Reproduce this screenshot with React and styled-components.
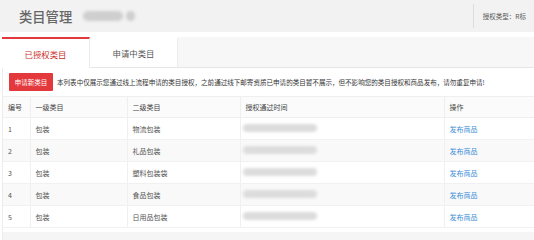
import React from "react";
import styled, { createGlobalStyle } from "styled-components";

const Global = createGlobalStyle`
  html, body { margin: 0; padding: 0; background: #fff; }
  body { font-family: "Noto Sans CJK SC", "Liberation Sans", sans-serif; color: #444; overflow: hidden; }
`;

const Page = styled.div`
  width: 534px;
  height: 240px;
  display: flex;
  flex-direction: column;
  overflow: hidden;
`;

const Header = styled.header`
  height: 32px;
  background: #f2f2f2;
  display: flex;
  align-items: center;
  padding-left: 19px;
  flex-shrink: 0;
`;

const Title = styled.h1`
  margin: 0;
  font-size: 13.3px;
  font-weight: 500;
  color: #666;
  letter-spacing: 0;
`;

const Blur = styled.span`
  display: inline-block;
  width: ${(p) => p.w}px;
  height: ${(p) => p.h}px;
  border-radius: 5px;
  background: ${(p) => p.c || "#cfcfcf"};
  filter: blur(1.6px);
  margin-left: ${(p) => p.ml || 0}px;
`;

const HeaderRight = styled.div`
  margin-left: auto;
  display: flex;
  align-items: center;
  height: 100%;
`;

const Divider = styled.span`
  width: 1px;
  height: 24px;
  background: #dcdcdc;
  margin-right: 9px;
`;

const AuthType = styled.span`
  font-size: 6.5px;
  color: #555;
  padding-right: 8px;
`;

const TabBar = styled.div`
  margin-top: 5px;
  margin-left: 2px;
  height: 30px;
  background: #f7f7f7;
  border-bottom: 1px solid #e6e6e6;
  display: flex;
  flex-shrink: 0;
`;

const Tab = styled.div`
  width: 88px;
  background: #fff;
  box-sizing: border-box;
  border-top: 2px solid ${(p) => (p.active ? "#e4393c" : "transparent")};
  border-right: 1px solid #ececec;
  display: flex;
  align-items: center;
  justify-content: center;
  font-size: 8.4px;
  color: ${(p) => (p.active ? "#c9302c" : "#555")};
  margin-bottom: ${(p) => (p.active ? "-1px" : "0")};
`;

const Content = styled.div`
  margin-left: 2px;
  border-left: 1px solid #ececec;
  flex: 1;
  display: flex;
  flex-direction: column;
`;

const Toolbar = styled.div`
  display: flex;
  align-items: center;
  padding: 5px 0 0 6px;
  height: 18px;
  margin-bottom: 5px;
`;

const RedButton = styled.button`
  width: 44px;
  height: 18px;
  border: none;
  border-radius: 1px;
  background: #e4393c;
  color: #fff;
  font-family: inherit;
  font-size: 6.5px;
  padding: 0;
  cursor: pointer;
`;

const Notice = styled.span`
  margin-left: 4px;
  font-size: 6.55px;
  color: #333;
  white-space: nowrap;
`;

const Table = styled.table`
  width: 531px;
  border-collapse: collapse;
  table-layout: fixed;
  font-size: 7px;
  color: #555;
  border-top: 1px solid #efefef;
`;

const Th = styled.th`
  height: 20px;
  text-align: left;
  font-weight: normal;
  color: #444;
  padding: 0 0 0 ${(p) => p.pl || 5}px;
  background: #fbfbfb;
  border-right: ${(p) => (p.last ? "none" : "1px solid #efefef")};
  border-bottom: 1px solid #efefef;
`;

const Tr = styled.tr`
  background: ${(p) => (p.alt ? "#f9f9f9" : "#fff")};
`;

const Td = styled.td`
  height: 21px;
  padding: 0 0 0 ${(p) => p.pl || 5}px;
  border-right: ${(p) => (p.last ? "none" : "1px solid #f0f0f0")};
  border-bottom: 1px solid #f1f1f1;
`;

const Link = styled.a`
  color: #3d8fd8;
  text-decoration: none;
`;

const Footer = styled.div`
  margin-top: 4px;
  height: 8px;
  background: #f5f5f5;
`;

const rows = [
  ["1", "包装", "物流包装"],
  ["2", "包装", "礼品包装"],
  ["3", "包装", "塑料包装袋"],
  ["4", "包装", "食品包装"],
  ["5", "包装", "日用品包装"],
];

export default function App() {
  return (
    <>
      <Global />
      <Page>
        <Header>
          <Title>类目管理</Title>
          <Blur w={40} h={10} ml={11} />
          <Blur w={9} h={10} ml={3} />
          <HeaderRight>
            <Divider />
            <AuthType>授权类型：R标</AuthType>
          </HeaderRight>
        </Header>
        <TabBar>
          <Tab active>已授权类目</Tab>
          <Tab>申请中类目</Tab>
        </TabBar>
        <Content>
          <Toolbar>
            <RedButton>申请新类目</RedButton>
            <Notice>
              本列表中仅展示您通过线上流程申请的类目授权，之前通过线下邮寄资质已申请的类目暂不展示，但不影响您的类目授权和商品发布，请勿重复申请!
            </Notice>
          </Toolbar>
          <Table>
            <colgroup>
              <col style={{ width: 27 }} />
              <col style={{ width: 97 }} />
              <col style={{ width: 113 }} />
              <col style={{ width: 204 }} />
              <col />
            </colgroup>
            <thead>
              <tr>
                <Th>编号</Th>
                <Th>一级类目</Th>
                <Th>二级类目</Th>
                <Th>授权通过时间</Th>
                <Th last>操作</Th>
              </tr>
            </thead>
            <tbody>
              {rows.map((r, i) => (
                <Tr key={r[0]} alt={i % 2 === 1}>
                  <Td>{r[0]}</Td>
                  <Td>{r[1]}</Td>
                  <Td>{r[2]}</Td>
                  <Td pl={2}>
                    <Blur w={74} h={8} c="#dcdcdc" />
                  </Td>
                  <Td last>
                    <Link href="#">发布商品</Link>
                  </Td>
                </Tr>
              ))}
            </tbody>
          </Table>
          <Footer />
        </Content>
      </Page>
    </>
  );
}
